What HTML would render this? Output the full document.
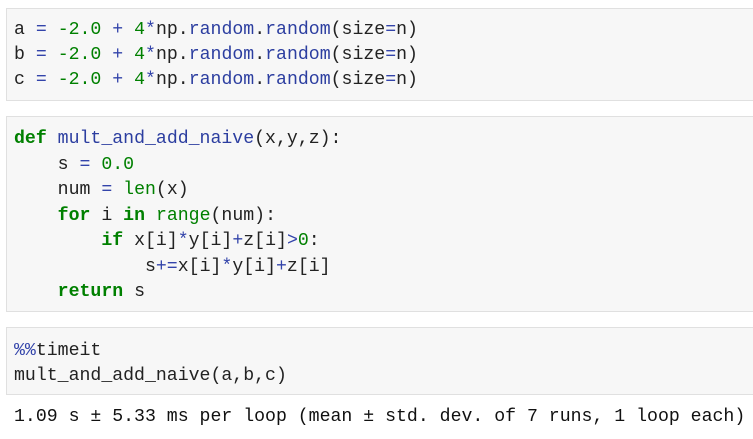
<!DOCTYPE html>
<html><head><meta charset="utf-8"><style>
html,body{margin:0;padding:0;background:#fff;width:753px;height:439px;overflow:hidden}
.cell{position:absolute;left:6px;width:760px;background:#f7f7f7;border:1px solid #e0e0e0;box-sizing:border-box}
pre{margin:0;position:absolute;left:14px;font-family:"Liberation Mono",monospace;font-size:18.2px;line-height:25.5px;color:#222}
.k{color:#008000;font-weight:bold}
.n{color:#008000}
.o{color:#3344aa}
.f{color:#2c3ea0}
.m{color:#3344aa}
</style></head><body>
<div class="cell" style="top:8px;height:93px"></div>
<pre style="top:18px;line-height:25px">a <span class="o">=</span> <span class="n">-2.0</span> <span class="o">+</span> <span class="n">4</span><span class="o">*</span>np.<span class="f">random</span>.<span class="f">random</span>(size<span class="o">=</span>n)
b <span class="o">=</span> <span class="n">-2.0</span> <span class="o">+</span> <span class="n">4</span><span class="o">*</span>np.<span class="f">random</span>.<span class="f">random</span>(size<span class="o">=</span>n)
c <span class="o">=</span> <span class="n">-2.0</span> <span class="o">+</span> <span class="n">4</span><span class="o">*</span>np.<span class="f">random</span>.<span class="f">random</span>(size<span class="o">=</span>n)</pre>
<div class="cell" style="top:116px;height:196px"></div>
<pre style="top:127px"><span class="k">def</span> <span class="f">mult_and_add_naive</span>(x,y,z):
    s <span class="o">=</span> <span class="n">0.0</span>
    num <span class="o">=</span> <span class="n">len</span>(x)
    <span class="k">for</span> i <span class="k">in</span> <span class="n">range</span>(num):
        <span class="k">if</span> x[i]<span class="o">*</span>y[i]<span class="o">+</span>z[i]<span class="o">&gt;</span><span class="n">0</span>:
            s<span class="o">+=</span>x[i]<span class="o">*</span>y[i]<span class="o">+</span>z[i]
    <span class="k">return</span> s</pre>
<div class="cell" style="top:327px;height:68px"></div>
<pre style="top:339px;line-height:25px"><span class="m">%%</span>timeit
mult_and_add_naive(a,b,c)</pre>
<pre style="top:405px;color:#111">1.09 s ± 5.33 ms per loop (mean ± std. dev. of 7 runs, 1 loop each)</pre>
</body></html>
